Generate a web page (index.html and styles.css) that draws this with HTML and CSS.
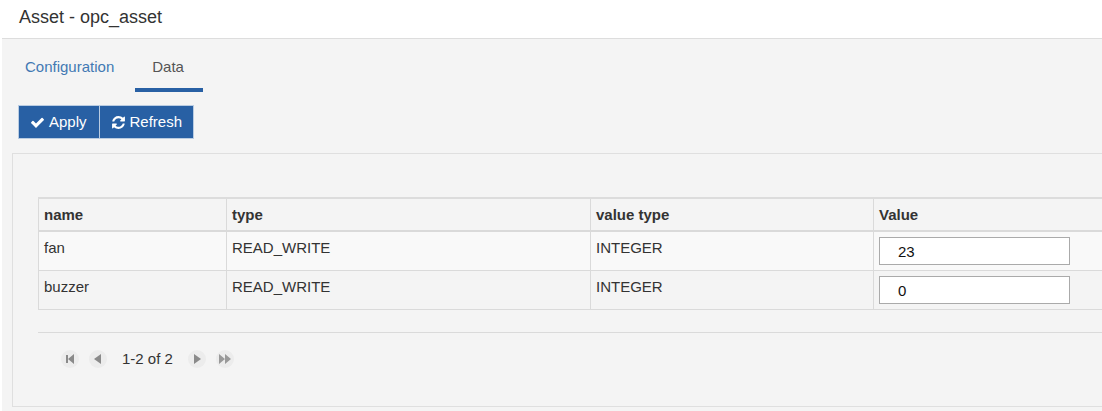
FILE: index.html
```html
<!DOCTYPE html>
<html lang="en">
<head>
<meta charset="utf-8">
<title>Asset - opc_asset</title>
<link rel="stylesheet" href="styles.css">
</head>
<body>
<header class="page-header"><h1 class="page-title">Asset - opc_asset</h1></header>
<main class="content">
  <nav class="tabs">
    <a class="tab" href="#configuration">Configuration</a>
    <a class="tab tab-active" href="#data" aria-current="page">Data</a>
  </nav>
  <div class="toolbar">
    <button class="btn" type="button">
      <svg class="icon" viewBox="0 0 1792 1792" aria-hidden="true"><path fill="currentColor" d="M1671 566q0 40-28 68l-724 724-136 136q-28 28-68 28t-68-28l-136-136-362-362q-28-28-28-68t28-68l136-136q28-28 68-28t68 28l294 295 656-657q28-28 68-28t68 28l136 136q28 28 28 68z"/></svg>
      <span>Apply</span>
    </button>
    <button class="btn" type="button">
      <svg class="icon" viewBox="0 0 1792 1792" aria-hidden="true"><path fill="currentColor" d="M1639 1056q0 5-1 7-64 268-268 434.500t-478 166.500q-146 0-282.500-55t-243.500-157l-129 129q-19 19-45 19t-45-19-19-45v-448q0-26 19-45t45-19h448q26 0 45 19t19 45-19 45l-137 137q71 66 161 102t187 36q134 0 250-65t186-179q11-17 53-117 8-23 30-23h192q13 0 22.500 9.500t9.500 22.500zm25-800v448q0 26-19 45t-45 19h-448q-26 0-45-19t-19-45 19-45l138-138q-148-137-349-137-134 0-250 65t-186 179q-11 17-53 117-8 23-30 23h-199q-13 0-22.500-9.500t-9.500-22.500v-7q65-268 270-434.500t480-166.500q146 0 284 55.500t245 156.500l130-129q19-19 45-19t45 19 19 45z"/></svg>
      <span>Refresh</span>
    </button>
  </div>
  <section class="panel">
    <table class="data-table">
      <colgroup><col class="col-name"><col class="col-type"><col class="col-value-type"><col></colgroup>
      <thead>
        <tr><th scope="col">name</th><th scope="col">type</th><th scope="col">value type</th><th scope="col">Value</th></tr>
      </thead>
      <tbody>
        <tr><td>fan</td><td>READ_WRITE</td><td>INTEGER</td><td class="value-cell"><input class="value-input" type="text" value="23" aria-label="fan value"></td></tr>
        <tr><td>buzzer</td><td>READ_WRITE</td><td>INTEGER</td><td class="value-cell"><input class="value-input" type="text" value="0" aria-label="buzzer value"></td></tr>
      </tbody>
    </table>
    <div class="pager">
      <button class="pager-btn" type="button" aria-label="First page"><svg viewBox="0 0 18 18"><path d="M5 5h2v8H5zM13 4v10L7 9z"/></svg></button>
      <button class="pager-btn" type="button" aria-label="Previous page"><svg viewBox="0 0 18 18"><path d="M12 4v10L5 9z"/></svg></button>
      <span class="pager-range">1-2 of 2</span>
      <button class="pager-btn" type="button" aria-label="Next page"><svg viewBox="0 0 18 18"><path d="M6 4v10l7-5z"/></svg></button>
      <button class="pager-btn" type="button" aria-label="Last page"><svg viewBox="0 0 18 18"><path class="light" d="M3 4v10l6-5zM9 4v10l6-5z"/></svg></button>
    </div>
  </section>
</main>
</body>
</html>
```
FILE: styles.css
```css
* {
  box-sizing: border-box;
}

body {
  margin: 0;
  background: #fff;
  color: #333;
  font: 15px/20px "Liberation Sans", Arial, sans-serif;
}

.page-header {
  padding: 5px 19px 9px;
}

.page-title {
  margin: 0;
  font-size: 18px;
  line-height: 24px;
  font-weight: 400;
}

.content {
  margin-left: 2px;
  padding: 0 0 4px 10px;
  border-top: 1px solid #ddd;
  background: #f4f4f4;
}

.tabs {
  display: flex;
  gap: 4px;
}

.tab {
  padding: 18px 17px 11px 13px;
  border-bottom: 4px solid transparent;
  color: #4279b3;
  text-decoration: none;
}

.tab-active {
  padding: 18px 19px 11px 17px;
  border-bottom-color: #2860a4;
  color: #555;
}

.toolbar {
  display: flex;
  padding: 13px 6px 14px;
}

.btn {
  display: flex;
  align-items: center;
  gap: 4px;
  height: 34px;
  padding: 0 12px 0 11px;
  border: 1px solid #b9cce2;
  background: #2860a4;
  color: #fff;
  font: inherit;
}

.btn + .btn {
  margin-left: -1px;
  padding-right: 11px;
}

.icon {
  width: 15px;
  height: 15px;
}

.panel {
  padding: 43px 0 37px 25px;
  border: 1px solid #dfdfdf;
  border-right: 0;
}

.data-table {
  width: 100%;
  table-layout: fixed;
  border-collapse: separate;
  border-spacing: 0;
  border-top: 2px solid #dcdcdc;
}

.col-name {
  width: 188px;
}

.col-type {
  width: 364px;
}

.col-value-type {
  width: 283px;
}

.data-table th,
.data-table td {
  padding: 6px 5px;
  border-left: 1px solid #dadada;
  border-bottom: 1px solid #dadada;
  text-align: left;
  vertical-align: top;
}

.data-table th {
  padding-bottom: 5px;
  border-bottom-width: 2px;
}

.data-table tbody tr:nth-child(odd) {
  background: #f9f9f9;
}

.data-table .value-cell {
  padding: 5px;
}

.value-input {
  display: block;
  width: 191px;
  height: 28px;
  padding: 0 18px;
  border: 1px solid #aaa;
  border-radius: 0;
  background: #fff;
  color: #111;
  font: inherit;
}

.pager {
  display: flex;
  align-items: center;
  margin-top: 22px;
  padding: 16px 23px 0;
  border-top: 1px solid #dadada;
}

.pager-btn {
  width: 18px;
  height: 18px;
  margin-right: 10px;
  padding: 0;
  border: 0;
  border-radius: 50%;
  background: #ececec;
}

.pager-btn svg {
  display: block;
  fill: #8a8a8a;
}

.pager-btn .light {
  fill: #999;
}

.pager-range {
  margin: 0 15px 0 5px;
}
```
